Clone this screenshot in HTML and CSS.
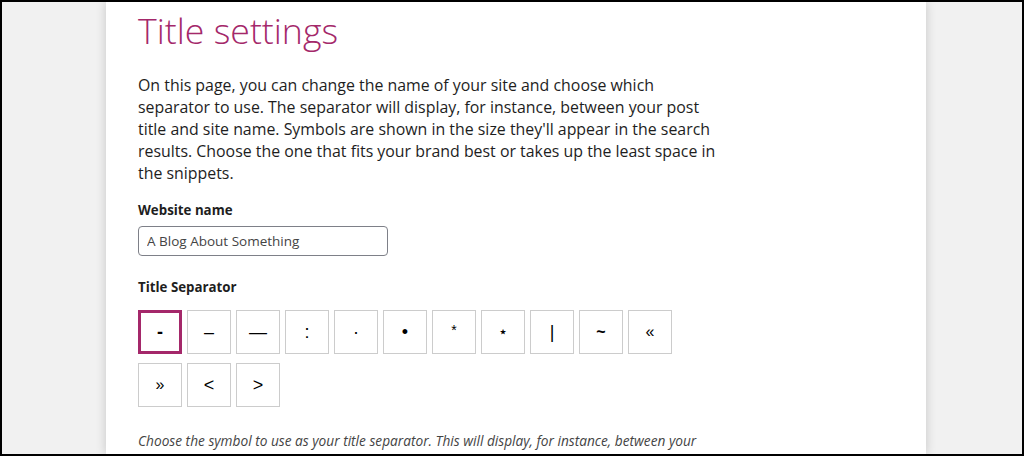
FILE: index.html
```html
<!DOCTYPE html>
<html lang="en">
<head>
<meta charset="utf-8">
<title>Title settings</title>
<link rel="stylesheet" href="styles.css">
</head>
<body>
<div class="frame">
  <main class="card">
    <h1 class="title">Title settings</h1>
    <p class="intro">On this page, you can change the name of your site and choose which<br>separator to use. The separator will display, for instance, between your post<br>title and site name. Symbols are shown in the size they'll appear in the search<br>results. Choose the one that fits your brand best or takes up the least space in<br>the snippets.</p>
    <label class="label" for="site-name">Website name</label>
    <input class="text-input" id="site-name" type="text" value="A Blog About Something">
    <div class="label sep-label">Title Separator</div>
    <div class="separators">
      <button class="sep selected">-</button>
      <button class="sep">&ndash;</button>
      <button class="sep">&mdash;</button>
      <button class="sep">:</button>
      <button class="sep">&middot;</button>
      <button class="sep">&bull;</button>
      <button class="sep asterisk">*</button>
      <button class="sep star">&#8902;</button>
      <button class="sep">|</button>
      <button class="sep tilde">~</button>
      <button class="sep quote">&laquo;</button>
      <button class="sep quote">&raquo;</button>
      <button class="sep">&lt;</button>
      <button class="sep">&gt;</button>
    </div>
    <p class="hint">Choose the symbol to use as your title separator. This will display, for instance, between your post title and site name. Symbols are shown in the size they'll appear in the search results.</p>
  </main>
</div>
</body>
</html>
```
FILE: styles.css
```css
html, body {
  margin: 0;
  padding: 0;
}
body {
  background: #000;
}
.frame {
  box-sizing: border-box;
  width: 1024px;
  height: 456px;
  border: 2px solid #000;
  background: #f1f1f1;
  overflow: hidden;
  display: flex;
}
.card {
  box-sizing: border-box;
  width: 820px;
  margin-left: 104px;
  background: #fff;
  box-shadow: 0 0 10px rgba(0, 0, 0, 0.18);
  padding: 0 32px;
  font-family: "Open Sans", "Noto Sans", sans-serif;
  color: #1e1e1e;
  font-size: 14px;
}
.title {
  margin: 0;
  padding-top: 5px;
  font-weight: 300;
  font-size: 35.7px;
  line-height: 46px;
  color: #a4286a;
}
.intro {
  width: 620px;
  margin: 21px 0 0;
  line-height: 22px;
  font-size: 15.9px;
}
.label {
  display: block;
  font-weight: 700;
  font-size: 13.3px;
  line-height: 20px;
  margin-top: 16px;
}
.text-input {
  display: block;
  box-sizing: border-box;
  width: 250px;
  height: 30px;
  margin-top: 6px;
  padding: 0 8px;
  border: 1px solid #7e8088;
  border-radius: 4px;
  font-family: inherit;
  font-size: 13.5px;
  color: #444;
}
.sep-label {
  margin-top: 21px;
}
.separators {
  display: flex;
  flex-wrap: wrap;
  gap: 9px 5px;
  width: 560px;
  margin-top: 13px;
}
.sep {
  box-sizing: border-box;
  width: 44px;
  height: 44px;
  padding: 0;
  border: 1px solid #ccc;
  background: #fff;
  font-family: "Liberation Sans", Arial, sans-serif;
  font-size: 18px;
  line-height: 1;
  color: #000;
  cursor: pointer;
}
.sep.selected {
  border: 3px solid #a4286a;
  font-weight: 700;
}
.sep.asterisk {
  font-size: 14px;
  padding-bottom: 4px;
}
.sep.star {
  font-size: 16px;
}
.sep.tilde {
  font-weight: 700;
  font-size: 16px;
}
.sep.quote {
  font-size: 16px;
}
.hint {
  margin: 23px 0 0;
  font-style: italic;
  font-size: 13.7px;
  line-height: 22px;
  color: #444;
  max-width: 575px;
}
```
